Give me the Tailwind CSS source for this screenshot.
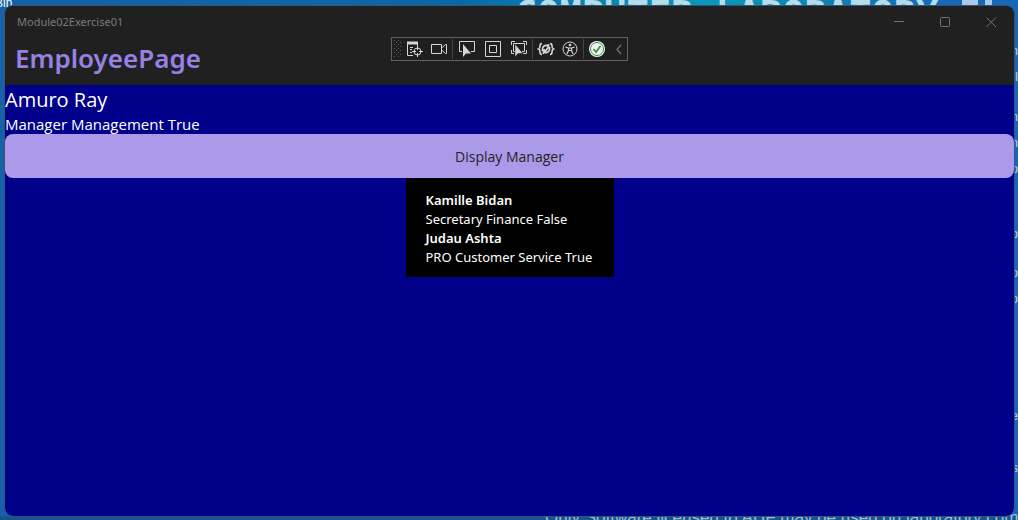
<!DOCTYPE html>
<html lang="en">
<head>
<meta charset="utf-8">
<title>Module02Exercise01</title>
<script src="https://cdn.jsdelivr.net/npm/@tailwindcss/browser@4"></script>
</head>
<body class="relative flex h-screen flex-col overflow-hidden bg-linear-to-r from-[#1562a8] via-[#086aa8] to-[#1767b8] pt-[6px] pr-1 pb-1 pl-[5px] font-['Open_Sans',sans-serif]">
  <div aria-hidden="true" class="absolute inset-0 z-0 overflow-hidden whitespace-nowrap text-[#b5dce8]">
    <div class="absolute top-0 left-[460px] h-2 w-[490px] bg-linear-to-r from-transparent via-[#0699b8] to-transparent"></div>
    <div class="absolute bottom-0 left-0 h-1 w-full bg-[#13568f]"></div>
    <span class="absolute -top-[5px] -left-[5px] font-['Liberation_Sans',sans-serif] text-xs leading-4 text-white">Bin</span>
    <span class="absolute -top-[3px] left-[515px] font-['DejaVu_Sans_Mono',monospace] text-[37px] leading-9 font-bold">COMPUTER LABORATORY</span>
    <div class="absolute top-0 left-[962px] flex gap-[7px]"><i class="h-2 w-4 bg-[#a8c8ec]"></i><i class="h-2 w-[7px] bg-[#a8c8ec]"></i></div>
    <span class="absolute -bottom-2 left-[545px] font-['Liberation_Sans',sans-serif] text-[17px] leading-5 text-[#9cc0d0]">Only Software licensed to AUF may be used on laboratory computers</span>
    <div class="absolute top-[43px] right-0 flex flex-col items-end font-['Liberation_Sans',sans-serif] text-xs">
      <span class="h-[26px]">n</span><span class="h-10">ll</span><span class="h-[26px]">h</span><span class="h-[26px]">n</span><span class="h-[65px]">o</span><span class="h-[39px]">o</span><span class="h-[26px]">o</span><span class="h-[117px]">o</span><span class="h-[52px]">e</span><span>s</span>
    </div>
  </div>

  <main class="relative z-10 flex flex-1 flex-col overflow-hidden rounded-lg bg-[#00008b] outline outline-[#38546c]">
    <header class="relative h-[79px] bg-[#202020]">
      <div class="flex h-8 items-center justify-between pl-3">
        <span class="font-['Noto_Sans',sans-serif] text-[11px] text-[#7b7b7b]">Module02Exercise01</span>
        <div class="flex text-[#737373]">
          <button aria-label="Minimize" class="flex h-8 w-[46px] items-center justify-center"><svg width="11" height="11" fill="none" stroke="currentColor"><path d="M0 4.500h10"/></svg></button>
          <button aria-label="Maximize" class="flex h-8 w-[46px] items-center justify-center"><svg width="11" height="11" fill="none" stroke="currentColor"><rect x=".5" y=".5" width="9" height="9" rx="1"/></svg></button>
          <button aria-label="Close" class="flex h-8 w-[46px] items-center justify-center"><svg width="11" height="11" fill="none" stroke="currentColor"><path d="M.5.5l9.500 9.500M10 .5L.5 10"/></svg></button>
        </div>
      </div>
      <h1 class="pl-[10px] font-['Noto_Sans',sans-serif] text-[26px] leading-10 font-semibold text-[#9880e5]">EmployeePage</h1>

      <div role="toolbar" aria-label="Debug tools" class="absolute inset-x-0 top-[31px] mx-auto flex h-6 w-[237px] items-center border border-[#626262] bg-[#1f1f1f] text-[#d6d6d6]">
        <svg class="ml-[2px] shrink-0" width="7" height="18"><defs><pattern id="grip" width="4" height="4" patternUnits="userSpaceOnUse"><path fill="#5c5c5c" d="M0 0h1v1H0zM2 2h1v1H2z"/></pattern></defs><rect width="7" height="18" fill="url(#grip)"/></svg>
        <button aria-label="Go to live visual tree" class="ml-1 flex h-full w-[20px] items-center justify-center"><svg width="18" height="18" fill="none" stroke="currentColor"><path d="M7 15.500H1.500v-13h10V6"/><path d="M1 3h11" stroke-width="3"/><path d="M4 7.500h3M4 9.500h2M4 12.500h2"/><circle cx="11.500" cy="11.500" r="3.500"/><path d="M11.500 6v4M11.500 13v4M6 11.500h4M13 11.500h4"/></svg></button>
        <button aria-label="Record" class="ml-1 flex h-full w-[20px] items-center justify-center"><svg width="18" height="18" fill="none" stroke="currentColor"><path d="M1.500 4.500h10v9h-10zM11.500 8l4-3.500h1v9h-1l-4-3.500"/></svg></button>
        <span class="ml-[3px] h-5 w-px bg-[#444]"></span>
        <button aria-label="Select element" class="ml-1 flex h-full w-[20px] items-center justify-center"><svg width="18" height="18" fill="none" stroke="currentColor"><path d="M4 11.500H1.500v-10h15v10H13"/><path d="M5 4v13l3-3.500h5z" fill="currentColor" stroke="none"/></svg></button>
        <button aria-label="Display layout adorners" class="ml-[6px] flex h-full w-[20px] items-center justify-center"><svg width="18" height="18" fill="none" stroke="currentColor"><path d="M1.500 1.500h15v15h-15zM5.500 5.500h7v7h-7z"/></svg></button>
        <button aria-label="Track focused element" class="ml-[6px] flex h-full w-[20px] items-center justify-center"><svg width="18" height="18" fill="none" stroke="currentColor"><path d="M1.500 5V1.500H5M13 1.500h3.500V5M16.500 10v3.500H13M1.500 10v3.500H4M5 11.500H3.500v-8h11v8H12"/><path d="M5 4v13l3-3.500h5z" fill="currentColor" stroke="#1f1f1f" stroke-width=".5"/></svg></button>
        <span class="ml-[3px] h-5 w-px bg-[#444]"></span>
        <button aria-label="Hot Reload settings" class="ml-[3px] flex h-full w-[20px] items-center justify-center"><svg width="18" height="18" fill="none" stroke="currentColor"><path d="M5 3.500Q3 3.500 3 6t-1.500 3q1.500.5 1.500 3t2 2.500M13 3.500q2 0 2 2.500t1.500 3q-1.500.5-1.500 3t-2 2.500" stroke-width="1.600"/><path d="M5.500 11V8.500a3.500 3.500 0 0 1 6-2V4M12.500 7v2.500a3.500 3.500 0 0 1-6 2V14M6.500 9.500l2 1.500 3-4" stroke-width="1.700"/></svg></button>
        <button aria-label="Accessibility" class="ml-1 flex h-full w-[20px] items-center justify-center"><svg width="18" height="18" fill="none" stroke="currentColor"><circle cx="9" cy="9" r="7"/><circle cx="9" cy="5" r="1.300" fill="currentColor" stroke="none"/><path d="M4.500 7.200l3 .8h3l3-.8M7.500 8v2.500L6 14M10.500 8v2.500L12 14M7.500 10.500h3" stroke-width="1.200"/></svg></button>
        <span class="ml-[3px] h-5 w-px bg-[#444]"></span>
        <button aria-label="Hot Reload status" class="ml-[3px] flex h-full w-[20px] items-center justify-center"><svg width="18" height="18" fill="none"><circle cx="9" cy="9" r="8" fill="#f4f4f4"/><circle cx="9" cy="9" r="6.500" stroke="#37943b"/><path d="M5.500 9l2.500 3 4.500-6" stroke="#37943b" stroke-width="1.800"/></svg></button>
        <button aria-label="Collapse toolbar" class="ml-[6px] flex h-full w-3 items-center justify-center"><svg width="8" height="12" fill="none" stroke="#747474" stroke-width="1.300"><path d="M6 2L2 6.500 6 11"/></svg></button>
      </div>
    </header>

    <p class="text-xl leading-[30px] text-white">Amuro Ray</p>
    <p class="text-[15px] leading-[19px] text-white">Manager Management True</p>
    <button class="h-11 shrink-0 rounded-lg bg-[#ac99ea] pt-[2px] text-sm text-[#242424]">Display Manager</button>
    <section class="w-52 self-center bg-black px-5 pt-[13px] pb-[10px] font-['Noto_Sans',sans-serif] text-[13px] leading-[19px] whitespace-nowrap text-white">
      <h2 class="font-semibold">Kamille Bidan</h2>
      <p>Secretary Finance False</p>
      <h2 class="font-semibold">Judau Ashta</h2>
      <p>PRO Customer Service True</p>
    </section>
  </main>
</body>
</html>
